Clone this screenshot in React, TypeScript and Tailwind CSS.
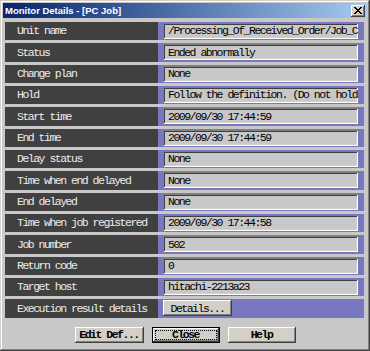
import React from "react";

const rows: { label: string; value?: string; button?: boolean }[] = [
  { label: "Unit name", value: "/Processing_Of_Received_Order/Job_C" },
  { label: "Status", value: "Ended abnormally" },
  { label: "Change plan", value: "None" },
  { label: "Hold", value: "Follow the definition. (Do not hold" },
  { label: "Start time", value: "2009/09/30 17:44:59" },
  { label: "End time", value: "2009/09/30 17:44:59" },
  { label: "Delay status", value: "None" },
  { label: "Time when end delayed", value: "None" },
  { label: "End delayed", value: "None" },
  { label: "Time when job registered", value: "2009/09/30 17:44:58" },
  { label: "Job number", value: "502" },
  { label: "Return code", value: "0" },
  { label: "Target host", value: "hitachi-2213a23" },
  { label: "Execution result details", button: true },
];

const mono = "font-['Liberation_Mono',monospace] text-[11.5px] tracking-[-1.5px] leading-none";

export default function App() {
  return (
    <div className="w-[370px] h-[351px] bg-[#c8c8c8] p-[3px] flex flex-col shadow-[inset_-1px_-1px_#404040,inset_1px_1px_#d4d0c8,inset_-2px_-2px_#808080,inset_2px_2px_#ffffff] overflow-hidden">
      {/* Title bar */}
      <div className="h-[15px] flex items-center justify-between pl-[2px] pr-[2px] bg-gradient-to-r from-[#0a246a] to-[#a6caf0]">
        <span className="font-['Liberation_Sans',Arial,sans-serif] font-bold text-[9.5px] text-white leading-none">
          Monitor Details - [PC Job]
        </span>
        <div className="w-[14px] h-[12px] bg-[#d4d0c8] flex items-center justify-center shadow-[inset_-1px_-1px_#404040,inset_1px_1px_#ffffff,inset_-2px_-2px_#808080]">
          <svg width="8" height="7" viewBox="0 0 8 7">
            <path d="M0 0h2v1h1v1h2v-1h1v-1h2v1h-1v1h-1v1h-1v1h1v1h1v1h1v1h-2v-1h-1v-1h-2v1h-1v1h-2v-1h1v-1h1v-1h1v-1h-1v-1h-1v-1h-1z" fill="#000" />
          </svg>
        </div>
      </div>

      {/* Table */}
      <div className="mt-[4px] ml-[2px] mr-[3px] flex flex-col gap-[3px]">
        {rows.map((r) => (
          <div key={r.label} className="flex h-[18.33px]">
            <div className={`w-[153px] bg-[#404040] text-[#ececec] flex items-center pl-[12px] ${mono}`}>
              {r.label}
            </div>
            <div className="flex-1 bg-[#7878c0] flex items-center pl-[5px] pr-[6px]">
              {r.button ? (
                <div className={`w-[69px] h-[16px] bg-[#d4d0c8] flex items-center justify-center text-black shadow-[inset_-1px_-1px_#404040,inset_1px_1px_#ffffff,inset_-2px_-2px_#808080] ${mono}`}>
                  Details...
                </div>
              ) : (
                <div className={`flex-1 h-[16px] bg-[#c8c8c8] flex items-center pl-[5px] overflow-hidden whitespace-nowrap text-black shadow-[inset_1px_1px_#808080,inset_-1px_-1px_#ffffff,inset_2px_2px_#404040,inset_-2px_-2px_#d4d0c8] ${mono}`}>
                  {r.value}
                </div>
              )}
            </div>
          </div>
        ))}
      </div>

      {/* Buttons */}
      <div className="mt-[9px] flex justify-center gap-[8px]">
        <div className={`w-[69px] h-[16px] bg-[#d4d0c8] flex items-center justify-center text-black font-bold shadow-[inset_-1px_-1px_#404040,inset_1px_1px_#ffffff,inset_-2px_-2px_#808080] ${mono}`}>
          Edit Def...
        </div>
        <div className="w-[68px] h-[16px] bg-[#000] p-[1px] flex">
          <div className={`flex-1 bg-[#d4d0c8] flex items-center justify-center shadow-[inset_-1px_-1px_#404040,inset_1px_1px_#ffffff,inset_-2px_-2px_#808080] p-[2px]`}>
            <div className={`w-full h-full border border-dotted border-black flex items-center justify-center text-black font-bold ${mono}`}>
              Close
            </div>
          </div>
        </div>
        <div className={`w-[68px] h-[16px] bg-[#d4d0c8] flex items-center justify-center text-black font-bold shadow-[inset_-1px_-1px_#404040,inset_1px_1px_#ffffff,inset_-2px_-2px_#808080] ${mono}`}>
          Help
        </div>
      </div>
    </div>
  );
}
